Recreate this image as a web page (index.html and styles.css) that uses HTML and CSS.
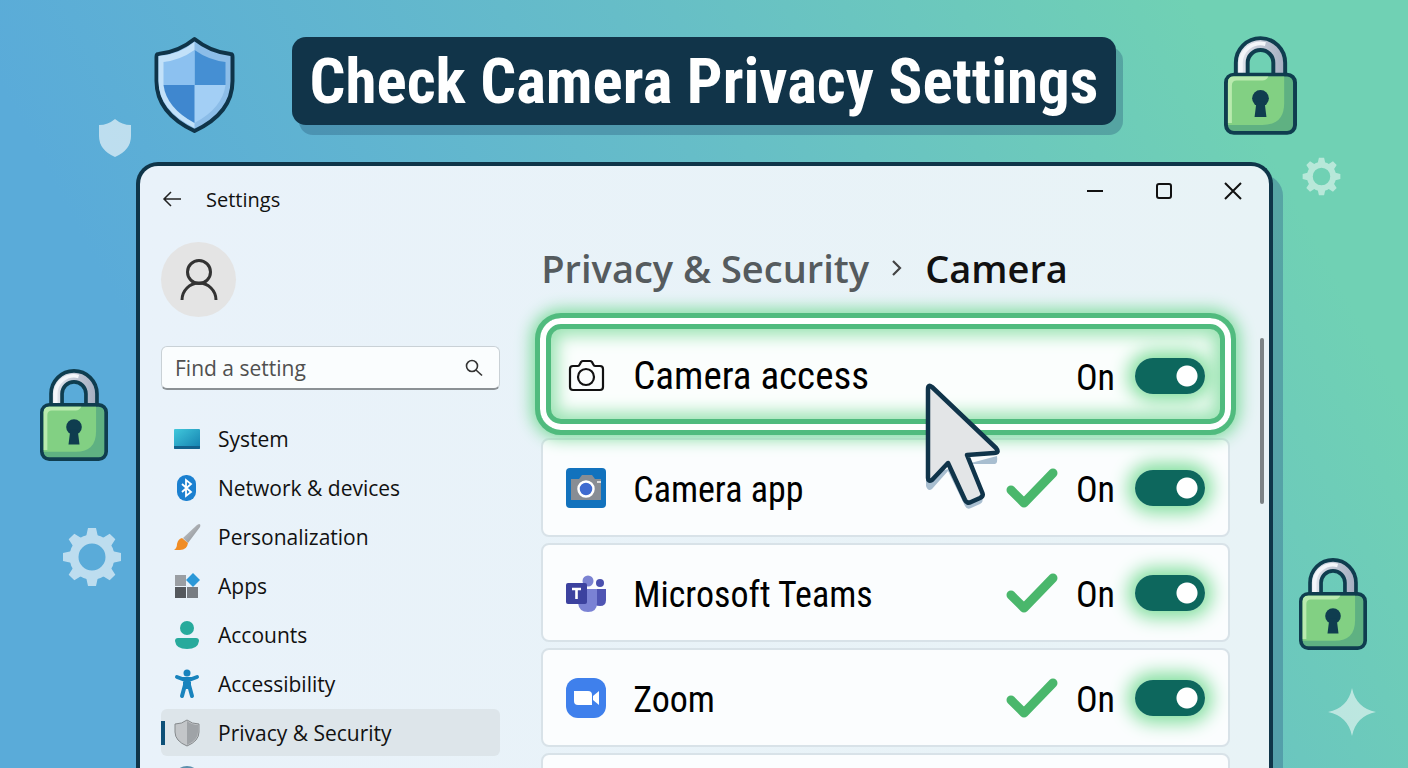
FILE: index.html
```html
<!DOCTYPE html>
<html lang="en">
<head>
    <meta charset="utf-8">
    <title>Check Camera Privacy Settings</title>
    <link rel="stylesheet" href="styles.css">
</head>
<body>
    <!-- shared shapes -->
    <svg class="defs" width="0" height="0" aria-hidden="true">
        <defs>
            <linearGradient id="steel" x1="0" y1="0" x2="1" y2="0">
                <stop offset="0" stop-color="#e8ecf2"/>
                <stop offset="0.5" stop-color="#c3c9d6"/>
                <stop offset="1" stop-color="#a4aec0"/>
            </linearGradient>
            <linearGradient id="screen" x1="0" y1="0" x2="1" y2="1">
                <stop offset="0" stop-color="#41c8dc"/>
                <stop offset="1" stop-color="#137fae"/>
            </linearGradient>
            <linearGradient id="silver" x1="0" y1="0" x2="1" y2="1">
                <stop offset="0" stop-color="#c9ccd0"/>
                <stop offset="1" stop-color="#85898e"/>
            </linearGradient>
            <symbol id="lock" viewBox="0 0 74 100">
                <path d="M12 42V27a25 25 0 0 1 50 0v15H50V27a13 13 0 0 0-26 0v15z" fill="url(#steel)" stroke="#0f3d4f" stroke-width="4"/>
                <path d="M17 38V27a20 20 0 0 1 25-19" fill="none" stroke="#f4f6fa" stroke-width="4"/>
                <rect x="2" y="39" width="70" height="59" rx="8" fill="#5fb182" stroke="#0f3d4f" stroke-width="4"/>
                <path d="M4 47q0-6 6-6h51v27q0 22-22 22H4z" fill="#82d083"/>
                <path d="M4 88V47q0-6 6-6h35q-2 4-6 4H13q-5 0-5 5v38z" fill="#b9eaae"/>
                <circle cx="37" cy="63" r="8.500" fill="#0f3d4f"/>
                <path d="M33 66h8l2 16H31z" fill="#0f3d4f"/>
            </symbol>
            <symbol id="gear" viewBox="0 0 60 60">
                <circle cx="30" cy="30" r="18" fill="none" stroke="#fff" stroke-width="9"/>
                <path id="teeth" d="M24 10l2-9h8l2 9zM24 50l2 9h8l2-9zM10 24l-9 2v8l9 2zM50 24l9 2v8l-9 2z" fill="#fff"/>
                <use href="#teeth" transform="rotate(45 30 30)"/>
            </symbol>
            <symbol id="check" viewBox="0 0 52 40">
                <path d="M5 22l13 13L47 5" fill="none" stroke="#4ab76c" stroke-width="9" stroke-linecap="round" stroke-linejoin="round"/>
            </symbol>
        </defs>
    </svg>

    <div class="decor" aria-hidden="true">
        <svg class="shield" viewBox="0 0 82 98">
            <path d="M41 3q16 13 36 15 2 0 2 3v24q0 32-38 50Q3 77 3 45V21q0-3 2-3Q25 16 41 3z" fill="#8cbde8" stroke="#0f3449" stroke-width="4" stroke-linejoin="round"/>
            <path d="M41 6v86Q5 74 5 45V20q20-1 36-14z" fill="#c2e1f9"/>
            <path d="M41 14q14 10 31 12v23H41z" fill="#458fd3"/>
            <path d="M41 14Q27 24 10 26v23h31z" fill="#8cc1f0"/>
            <path d="M41 49h31q-3 23-31 38z" fill="#a3cff5"/>
            <path d="M41 49H10q3 23 31 38z" fill="#3f87cf"/>
        </svg>
        <svg class="mini-shield" viewBox="0 0 34 38"><path d="M17 0q7 6 16 6v11q0 14-16 21Q1 31 1 17V6q9 0 16-6z" fill="#fff"/></svg>
        <svg class="lock lock-top"><use href="#lock"/></svg>
        <svg class="lock lock-left"><use href="#lock"/></svg>
        <svg class="lock lock-right"><use href="#lock"/></svg>
        <svg class="gear gear-left"><use href="#gear"/></svg>
        <svg class="gear gear-right"><use href="#gear"/></svg>
        <svg class="sparkle" viewBox="0 0 48 48"><path d="M24 0q4 20 24 24-20 4-24 24Q20 28 0 24 20 20 24 0z" fill="#fff"/></svg>
    </div>

    <h1 class="banner">Check Camera Privacy Settings</h1>

    <div class="window">
        <header class="titlebar">
            <button class="icon-btn" aria-label="Back">
                <svg width="20" height="18" viewBox="0 0 20 18"><path d="M19 9H2M9 2L2 9l7 7" fill="none" stroke="#222" stroke-width="1.500"/></svg>
            </button>
            <span class="app-name">Settings</span>
            <div class="controls">
                <button class="icon-btn" aria-label="Minimize"><svg width="18" height="18"><path d="M1 9h16" stroke="#111" stroke-width="2"/></svg></button>
                <button class="icon-btn" aria-label="Maximize"><svg width="18" height="18"><rect x="2" y="2" width="14" height="14" rx="2" fill="none" stroke="#111" stroke-width="2"/></svg></button>
                <button class="icon-btn" aria-label="Close"><svg width="18" height="18"><path d="M1 1l16 16M17 1L1 17" stroke="#111" stroke-width="2"/></svg></button>
            </div>
        </header>

        <div class="content">
            <aside class="sidebar">
                <div class="avatar">
                    <svg width="38" height="42" viewBox="0 0 38 42"><g fill="none" stroke="#333" stroke-width="3"><circle cx="19" cy="13" r="11.500"/><path d="M2 41a17 17 0 0 1 34 0"/></g></svg>
                </div>
                <div class="search">
                    <input type="search" placeholder="Find a setting" aria-label="Find a setting">
                    <svg width="18" height="18" viewBox="0 0 18 18"><g fill="none" stroke="#333" stroke-width="1.600"><circle cx="7" cy="7" r="5.500"/><path d="M11 11l6 5.500"/></g></svg>
                </div>
                <nav class="nav">
                    <a href="#">
                        <svg viewBox="0 0 28 28"><rect x="1" y="4" width="26" height="20" rx="1" fill="url(#screen)"/><path d="M1 21h26v2q0 1-1 1H2q-1 0-1-1z" fill="#12618c"/></svg>
                        System
                    </a>
                    <a href="#">
                        <svg viewBox="0 0 28 28"><rect x="4" y="1" width="19" height="26" rx="9" fill="#1b80d0"/><path d="M9 10l9 8-5 4V6l5 4-9 8" fill="none" stroke="#fff" stroke-width="1.800"/></svg>
                        Network &amp; devices
                    </a>
                    <a href="#">
                        <svg viewBox="0 0 28 28"><path d="M26 1q2 0 1 3L15 20l-5-5L24 2z" fill="url(#silver)"/><path d="M9 15l6 5q-1 7-8 7H1q3-2 3-6 1-5 5-6z" fill="#f08c25"/></svg>
                        Personalization
                    </a>
                    <a href="#">
                        <svg viewBox="0 0 28 28"><path d="M2 3h11v11H2z" fill="#9a9ea3"/><path d="M2 15h11v11H2z" fill="#54585d"/><path d="M14 15h11v11H14z" fill="#777c82"/><path d="M20 1l7 7-7 7-7-7z" fill="#2b98d8"/></svg>
                        Apps
                    </a>
                    <a href="#">
                        <svg viewBox="0 0 28 28"><circle cx="14" cy="7" r="7" fill="#27aa9c"/><path d="M5 17h18q3 0 3 3-1 8-12 8T2 20q0-3 3-3z" fill="#27aa9c"/></svg>
                        Accounts
                    </a>
                    <a href="#">
                        <svg viewBox="0 0 28 28"><circle cx="14" cy="3" r="3.500" fill="#1883bd"/><path d="M4 7l8 3h4l8-3M12 10h4v7h-4zM12 15L9 26M16 15l3 11" fill="#1883bd" stroke="#1883bd" stroke-width="4" stroke-linecap="round" stroke-linejoin="round"/></svg>
                        Accessibility
                    </a>
                    <a href="#" class="active">
                        <svg viewBox="0 0 28 28"><path d="M14 1q5 4 12 4v8q0 9-12 14Q2 22 2 13V5q7 0 12-4z" fill="#c3c6c9" stroke="#85898c"/><path d="M14 2q5 4 11 4v7q0 8-11 13z" fill="#9fa3a7"/></svg>
                        Privacy &amp; Security
                    </a>
                    <a href="#" aria-label="More">
                        <svg viewBox="0 0 28 28"><circle cx="14" cy="12" r="14" fill="#5d8fac"/></svg>
                    </a>
                </nav>
            </aside>

            <main class="main">
                <h2 class="crumbs">
                    <a href="#">Privacy &amp; Security</a>
                    <svg width="12" height="18" viewBox="0 0 12 18"><path d="M2 2l7 7-7 7" fill="none" stroke="#444" stroke-width="2.200"/></svg>
                    <span>Camera</span>
                </h2>

                <div class="row highlight">
                    <svg class="row-icon" viewBox="0 0 40 40"><g fill="none" stroke="#111" stroke-width="2.200" stroke-linejoin="round"><path d="M7 10h5q1 0 2-2l1-2q1-1 2-1h7q1 0 2 1l1 2q1 2 2 2h5q3 0 3 3v18q0 3-3 3H7q-3 0-3-3V13q0-3 3-3z"/><circle cx="20" cy="21" r="8"/></g></svg>
                    <label for="access">Camera access</label>
                    <span class="state">On</span>
                    <input type="checkbox" class="toggle" id="access" checked>
                    <svg class="pointer" viewBox="0 0 78 128">
                        <path d="M2 92v11q2 6 6 3l16-18 17 35q2 4 6 2l9-4q4-2 2-7L47 81h24q3-1 2-8z" fill="#2d5f8c" opacity=".4"/>
                        <path d="M4 6q0-5 4-2l64 61q4 5-2 5l-27 2 15 37q2 4-2 6l-9 4q-4 2-6-2L24 80 8 97q-4 2-4-2z" fill="#e3e5e7" stroke="#10344a" stroke-width="4.500" stroke-linejoin="round"/>
                    </svg>
                </div>

                <div class="row">
                    <svg class="row-icon" viewBox="0 0 40 40"><rect width="40" height="40" rx="4" fill="#1272bd"/><path d="M5 11h8l3-4h10l3 4h6v21H5z" fill="#888d94"/><path d="M31 13h4v2h-4z" fill="#ddd"/><circle cx="20" cy="21" r="7.500" fill="#3f6bd0" stroke="#fff" stroke-width="2.500"/></svg>
                    <label for="camera-app">Camera app</label>
                    <svg class="check"><use href="#check"/></svg>
                    <span class="state">On</span>
                    <input type="checkbox" class="toggle" id="camera-app" checked>
                </div>

                <div class="row">
                    <svg class="row-icon" viewBox="0 0 40 40"><circle cx="34" cy="10" r="4" fill="#4a50ae"/><path d="M28 16h12v11q0 6-6 6t-6-3z" fill="#4f55b3"/><circle cx="22" cy="8" r="5.500" fill="#7b83d2"/><path d="M12 16h19v14q0 9-9 9t-10-9z" fill="#7a82d4"/><rect y="10" width="21" height="21" rx="2" fill="#3c429f"/><path d="M6 16h9M10.500 16v10" stroke="#fff" stroke-width="2.600"/></svg>
                    <label for="teams">Microsoft Teams</label>
                    <svg class="check"><use href="#check"/></svg>
                    <span class="state">On</span>
                    <input type="checkbox" class="toggle" id="teams" checked>
                </div>

                <div class="row">
                    <svg class="row-icon" viewBox="0 0 40 40"><rect width="40" height="40" rx="12" fill="#3f80ec"/><path d="M8 13h14q4 0 4 4v10H12q-4 0-4-4z" fill="#fff"/><path d="M27 18l6-5v14l-6-5z" fill="#fff"/></svg>
                    <label for="zoom">Zoom</label>
                    <svg class="check"><use href="#check"/></svg>
                    <span class="state">On</span>
                    <input type="checkbox" class="toggle" id="zoom" checked>
                </div>

                <div class="row"></div>
            </main>
        </div>
        <div class="scrollbar"></div>
    </div>
</body>
</html>
```
FILE: styles.css
```css
* {
    box-sizing: border-box;
}
body {
    margin: 0;
    height: 100vh;
    overflow: hidden;
    display: flex;
    flex-direction: column;
    align-items: center;
    position: relative;
    background: linear-gradient(62deg, #5aabd9 20%, #66bdc8 56%, #70d1b4 88%);
    font-family: "Open Sans", "Noto Sans", sans-serif;
    color: #111;
}
.defs {
    position: absolute;
}
button {
    font: inherit;
}

/* background drawings */
.decor svg {
    position: absolute;
}
.shield {
    left: 153px;
    top: 36px;
    width: 83px;
    height: 98px;
}
.mini-shield {
    left: 98px;
    top: 119px;
    width: 34px;
    height: 38px;
    opacity: 0.6;
}
.lock {
    width: 68px;
    height: 92px;
}
.lock-top {
    right: 111px;
    top: 36px;
    width: 73px;
    height: 99px;
}
.lock-left {
    left: 40px;
    top: 369px;
}
.lock-right {
    right: 41px;
    top: 558px;
}
.gear-left {
    left: 62px;
    top: 527px;
    width: 60px;
    height: 60px;
    opacity: 0.6;
}
.gear-right {
    right: 67px;
    top: 157px;
    width: 39px;
    height: 39px;
    opacity: 0.5;
}
.sparkle {
    right: 32px;
    top: 688px;
    width: 48px;
    height: 48px;
    opacity: 0.55;
}

.banner {
    margin: 37px 0;
    padding: 2px 18px 0;
    border-radius: 14px;
    background: #113449;
    box-shadow: 7px 10px 0 rgba(40, 90, 120, 0.35);
    color: #fff;
    font-family: "Roboto Condensed", "Liberation Sans Narrow", Roboto, sans-serif;
    font-size: 63px;
    line-height: 86px;
    font-weight: 700;
    white-space: nowrap;
    z-index: 1;
}

.window {
    position: relative;
    align-self: stretch;
    flex: 1;
    min-height: 0;
    overflow: hidden;
    margin: 0 135px 0 136px;
    border: 4px solid #0f3549;
    border-bottom: 0;
    border-radius: 22px 22px 0 0;
    background: linear-gradient(90deg, #e9f2fa, #e8f3f6);
    box-shadow: 10px 12px 0 rgba(50, 100, 140, 0.4);
}
.titlebar {
    display: flex;
    align-items: center;
    height: 66px;
    padding: 0 27px 0 22px;
    font-size: 20px;
}
.icon-btn {
    display: flex;
    padding: 0;
    border: 0;
    background: none;
}
.app-name {
    margin-left: 24px;
}
.controls {
    display: flex;
    gap: 51px;
    margin: 0 0 16px auto;
}
.content {
    display: grid;
    grid-template-columns: 33fr 67fr;
    gap: 41px;
    padding: 0 39px 0 21px;
}

.avatar {
    display: flex;
    align-items: center;
    justify-content: center;
    width: 75px;
    height: 75px;
    margin: 10px 0 29px;
    border-radius: 50%;
    background: #e4e4e4;
}
.search {
    display: flex;
    align-items: center;
    height: 44px;
    padding: 0 16px 0 13px;
    border: 1px solid #c9d1d6;
    border-bottom: 2px solid #8b9195;
    border-radius: 6px;
    background: #fafdfe;
}
.search input {
    flex: 1;
    min-width: 0;
    padding: 0;
    border: 0;
    outline: 0;
    background: none;
    font: inherit;
    font-size: 21px;
}
.search input::placeholder {
    color: #505050;
}
.nav {
    display: flex;
    flex-direction: column;
    gap: 2px;
    margin-top: 25px;
}
.nav a {
    display: flex;
    align-items: center;
    gap: 17px;
    height: 47px;
    padding-left: 12px;
    border-radius: 6px;
    color: #111;
    font-size: 21px;
    text-decoration: none;
}
.nav svg {
    width: 28px;
    height: 28px;
    overflow: visible;
}
.nav .active {
    background: linear-gradient(90deg, #0d5078 4px, transparent 4px) 0 50% / 100% 24px no-repeat, #dde5ea;
}

.main {
    display: flex;
    flex-direction: column;
    gap: 6px;
}
.crumbs {
    display: flex;
    align-items: center;
    gap: 22px;
    height: 60px;
    margin: 6px 0 9px;
    font-size: 38px;
    font-weight: 600;
    white-space: nowrap;
}
.crumbs a {
    color: #555b5e;
    text-decoration: none;
}
.row {
    display: flex;
    align-items: center;
    height: 99px;
    padding: 0 23px;
    border: 2px solid #d8e2e8;
    border-radius: 8px;
    background: #fbfdfe;
    color: #000;
    font-family: "Roboto Condensed", "Liberation Sans Narrow", Roboto, sans-serif;
    font-size: 36px;
}
.row-icon {
    width: 40px;
    height: 40px;
    margin-right: 27px;
}
.row label {
    flex: 1;
    padding-top: 4px;
}
.highlight {
    position: relative;
    z-index: 1;
    height: 122px;
    margin: 0 -6px -3px;
    padding: 4px 26px 0;
    border: 5px solid #50bb7e;
    border-radius: 26px;
    background: #fbfefd;
    box-shadow: inset 0 0 0 6px #fff, inset 0 0 0 11px #50bb7e, inset 0 0 16px 18px #9ee4b5, 0 0 16px 4px #83dda1;
}
.row.highlight label {
    padding-top: 0;
    font-size: 39px;
}
.check {
    width: 52px;
    height: 40px;
    margin-right: 18px;
}
.state {
    margin-right: 20px;
    padding-top: 4px;
}
.toggle {
    appearance: none;
    width: 70px;
    height: 36px;
    margin: 0;
    border-radius: 18px;
    background: radial-gradient(circle at 52px 18px, #fff 10px, #0d675d 11px);
    box-shadow: 0 0 18px 7px #83df9e;
}
.toggle:not(:checked) {
    background: radial-gradient(circle at 18px 18px, #fff 10px, #7b8a8a 11px);
}

/* mouse pointer drawn over the cards */
.pointer {
    position: absolute;
    left: 384px;
    top: 65px;
    width: 78px;
    height: 128px;
}
.scrollbar {
    position: absolute;
    top: 172px;
    right: 5px;
    width: 4px;
    height: 166px;
    border-radius: 2px;
    background: #7b8285;
}
```
